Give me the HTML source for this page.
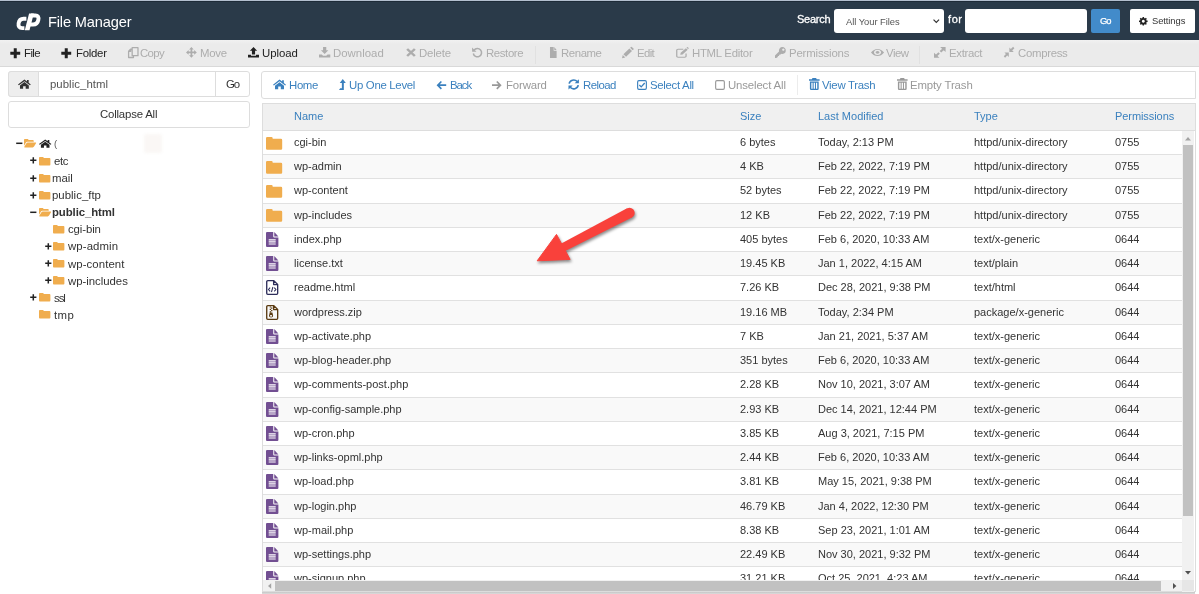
<!DOCTYPE html>
<html><head><meta charset="utf-8"><title>File Manager</title>
<style>
html,body{margin:0;padding:0;}
body{width:1199px;height:594px;overflow:hidden;background:#fff;position:relative;font-family:"Liberation Sans",sans-serif;}
.t{position:absolute;white-space:nowrap;line-height:1;font-family:"Liberation Sans",sans-serif;will-change:transform;}
#w{position:absolute;left:0;top:0;width:1199px;height:594px;transform:translateZ(0);}
.ic{position:absolute;display:block;overflow:visible;}
.b{position:absolute;box-sizing:border-box;}
</style></head><body><div id="w">

<div class="b" style="left:0;top:0;width:1199px;height:40px;background:#2a3a49;border-top:1px solid #b3bfcf;"></div><div class="b" style="left:0;top:1px;width:1199px;height:1px;background:#1e2b38;"></div>
<svg class="ic" style="left:15.500px;top:13px;width:25px;height:17.500px" viewBox="0 0 25 17.500"><path d="M10.400 5.700H7.600Q3.300 5.700 2.600 10.300T6.200 15.100H8.400" stroke="#fff" stroke-width="3.900" fill="none"/><path d="M8.800 17.300H13.500L17.800.4H13.100z" fill="#fff"/><path d="M15 2.550H19.400Q23.200 2.550 22.300 7T17 11.500H13.600" stroke="#fff" stroke-width="3.900" fill="none"/></svg>
<span class="t" style="left:48px;top:15px;font-size:14.6px;color:#fff;letter-spacing:-0.15px;">File Manager</span>
<span class="t" style="left:797.2px;top:14px;font-size:11px;color:#fff;letter-spacing:-0.25px;-webkit-text-stroke:.3px #fff;">Search</span>
<div class="b" style="left:834px;top:9px;width:110px;height:24px;background:#fff;border-radius:3px;"></div>
<span class="t" style="left:846.2px;top:17px;font-size:9.4px;color:#555;letter-spacing:-0.04px;">All Your Files</span>
<svg class="ic" style="left:933.200px;top:19.400px;width:6.600px;height:4.600px" viewBox="0 0 7 5"><path d="M.5.700L3.500 3.800 6.500.7" fill="none" stroke="#333" stroke-width="1.300"/></svg>
<span class="t" style="left:947.6px;top:14px;font-size:11px;color:#fff;letter-spacing:0.59px;-webkit-text-stroke:.3px #fff;">for</span>
<div class="b" style="left:965px;top:9px;width:122px;height:24px;background:#fff;border-radius:3px;"></div>
<div class="b" style="left:1090.500px;top:9px;width:29.500px;height:24px;background:#428bca;border-radius:2px;"></div>
<span class="t" style="left:1099.8px;top:16px;font-size:9.4px;color:#fff;letter-spacing:-1.05px;-webkit-text-stroke:.25px #fff;">Go</span>
<div class="b" style="left:1130px;top:9px;width:65px;height:24px;background:#fff;border-radius:2px;"></div>
<svg class="ic" style="left:1139.4px;top:16.9px;width:8.6px;height:8.6px;color:#222" viewBox="0 0 14 14" fill="currentColor" preserveAspectRatio="none"><path fill-rule="evenodd" d="M5.900 0h2.200l.35 1.750 1.250.52L11.200 1.280l1.520 1.520-.990 1.500.520 1.250L14 5.900v2.200l-1.750.350-.520 1.250.990 1.500-1.520 1.520-1.500-.990-1.250.520L8.100 14H5.900l-.350-1.750-1.250-.520-1.500.990-1.520-1.520.990-1.500-.520-1.250L0 8.100V5.900l1.750-.350.520-1.250-.990-1.500L2.800 1.280l1.500.990 1.250-.520zM7 4.600a2.400 2.400 0 1 0 .01 0z"/></svg>
<span class="t" style="left:1152px;top:16px;font-size:9.4px;color:#333;letter-spacing:-0.08px;">Settings</span>
<div class="b" style="left:0;top:40px;width:1199px;height:27px;background:linear-gradient(#f1f1f1 0,#ebebeb 4px);border-bottom:1px solid #d9d9d9;"></div>
<svg class="ic" style="left:10px;top:47.5px;width:10.5px;height:10.5px;color:#222" viewBox="0 0 14 14" fill="currentColor" preserveAspectRatio="none"><path d="M5 .4h4V5h4.600v4H9v4.600H5V9H.4V5H5z"/></svg>
<span class="t" style="left:24.4px;top:48px;font-size:11.4px;color:#222;letter-spacing:-0.58px;">File</span>
<svg class="ic" style="left:61.2px;top:47.5px;width:10.5px;height:10.5px;color:#222" viewBox="0 0 14 14" fill="currentColor" preserveAspectRatio="none"><path d="M5 .4h4V5h4.600v4H9v4.600H5V9H.4V5H5z"/></svg>
<span class="t" style="left:76px;top:48px;font-size:11.4px;color:#222;letter-spacing:-0.26px;">Folder</span>
<svg class="ic" style="left:127.6px;top:47px;width:10.6px;height:11.2px;color:#adadad" viewBox="0 0 14 14" fill="currentColor" preserveAspectRatio="none"><path fill="none" stroke="currentColor" stroke-width="1.700" stroke-linejoin="round" d="M5.500.8h7.700v10h-7.700zM5.500 2.800H3.300L.8 5.300v7.900h6.400v-2.400M1 5.300h2.500V3"/></svg>
<span class="t" style="left:140.4px;top:48px;font-size:11.4px;color:#adadad;letter-spacing:-0.61px;">Copy</span>
<svg class="ic" style="left:186.2px;top:47.2px;width:10.8px;height:10.8px;color:#adadad" viewBox="0 0 14 14" fill="currentColor" preserveAspectRatio="none"><path d="M7 0l3 3.400H8.100v2.500H10.600V4L14 7l-3.400 3V8.100H8.100v2.500H10L7 14 4 10.600h1.900V8.100H3.400V10L0 7l3.400-3v1.900h2.500V3.400H4z"/></svg>
<span class="t" style="left:200.2px;top:48px;font-size:11.4px;color:#adadad;letter-spacing:-0.29px;">Move</span>
<svg class="ic" style="left:247.7px;top:47px;width:11px;height:10.6px;color:#222" viewBox="0 0 14 14" fill="currentColor" preserveAspectRatio="none"><path d="M7 0l4.600 5H9v4.800H5V5H2.400zM0 10.200h3.800v1.300h6.400v-1.300H14V14H0z"/></svg>
<span class="t" style="left:262.2px;top:48px;font-size:11.4px;color:#222;letter-spacing:-0.07px;">Upload</span>
<svg class="ic" style="left:318.7px;top:47.2px;width:11.3px;height:10.6px;color:#adadad" viewBox="0 0 14 14" fill="currentColor" preserveAspectRatio="none"><path d="M5 0h4v4.4h2.6L7 9.4 2.4 4.4H5zM0 9.8h3.4L5 11.4h4l1.6-1.6H14V14H0z"/></svg>
<span class="t" style="left:333.2px;top:48px;font-size:11.4px;color:#adadad;letter-spacing:0.02px;">Download</span>
<svg class="ic" style="left:405.5px;top:48.3px;width:10px;height:9px;color:#adadad" viewBox="0 0 14 14" fill="currentColor" preserveAspectRatio="none"><path fill="none" stroke="currentColor" stroke-width="3.600" d="M1.600 1.600l10.800 10.800M12.400 1.600L1.600 12.400"/></svg>
<span class="t" style="left:419px;top:48px;font-size:11.4px;color:#adadad;letter-spacing:-0.19px;">Delete</span>
<svg class="ic" style="left:471.7px;top:47.2px;width:10.8px;height:10.8px;color:#adadad" viewBox="0 0 14 14" fill="currentColor" preserveAspectRatio="none"><path fill="none" stroke="currentColor" stroke-width="2" d="M2.6 4.2A5.4 5.4 0 1 1 1.7 8.4"/><path d="M0 .6l.2 5.6 5.6-.2z"/></svg>
<span class="t" style="left:486.2px;top:48px;font-size:11.4px;color:#adadad;letter-spacing:-0.38px;">Restore</span>
<svg class="ic" style="left:549.2px;top:47px;width:8.6px;height:11px;color:#adadad" viewBox="0 0 14 14" fill="currentColor" preserveAspectRatio="none"><path d="M1.6 0h6v4.8h4.8V14H1.6zM8.6 0l3.8 3.8H8.6z"/></svg>
<span class="t" style="left:561px;top:48px;font-size:11.4px;color:#adadad;letter-spacing:-0.42px;">Rename</span>
<svg class="ic" style="left:622.2px;top:46.8px;width:11.6px;height:11.2px;color:#adadad" viewBox="0 0 14 14" fill="currentColor" preserveAspectRatio="none"><path d="M0 14l.9-4 3.1 3.1zM1.7 9.1l7.2-7.2 3.2 3.2-7.2 7.2zM9.8 1L10.9 0q.7-.4 1.3.2l1.7 1.7q.5.6 0 1.2L12.9 4.1z"/></svg>
<span class="t" style="left:637.2px;top:48px;font-size:11.4px;color:#adadad;letter-spacing:-0.62px;">Edit</span>
<svg class="ic" style="left:676px;top:47px;width:12.8px;height:11px;color:#adadad" viewBox="0 0 14 14" fill="currentColor" preserveAspectRatio="none"><path fill="none" stroke="currentColor" stroke-width="1.4" stroke-linejoin="round" d="M11 8.4v3.2a1.4 1.4 0 0 1-1.4 1.4H2.2A1.4 1.4 0 0 1 .8 11.600V4.2A1.400 1.400 0 0 1 2.200 2.800H8"/><path d="M5 10.600l.5-2.700L11.600 1.700l2.200 2.200L7.700 10.100zM12.300 1l.7-.7q.5-.4 1 0l.9.900q.4.500 0 1L14.200 2.900z" transform="scale(.93)"/></svg>
<span class="t" style="left:692.2px;top:48px;font-size:11.4px;color:#adadad;letter-spacing:-0.28px;">HTML Editor</span>
<svg class="ic" style="left:774.6px;top:47px;width:10.8px;height:11px;color:#adadad" viewBox="0 0 14 14" fill="currentColor" preserveAspectRatio="none"><path fill-rule="evenodd" d="M9.500 0a4.500 4.500 0 1 1-1.600 8.700L6.900 9.800H5.300V11.400H3.700V13H2.300V14H0V10.800L5.200 5.600A4.500 4.500 0 0 1 9.500 0zM10.800 1.900a1.500 1.500 0 1 0 .01 0z"/></svg>
<span class="t" style="left:789px;top:48px;font-size:11.4px;color:#adadad;letter-spacing:-0.16px;">Permissions</span>
<svg class="ic" style="left:870.5px;top:48.2px;width:12.2px;height:8.8px;color:#adadad" viewBox="0 0 14 14" fill="currentColor" preserveAspectRatio="none"><path fill-rule="evenodd" d="M0 7Q3.200 1.400 7.500 1.400T15 7Q11.800 12.600 7.500 12.600T0 7zM7.500 2.900A4.100 4.100 0 1 0 7.510 2.900zM7.500 4.800a2.200 2.200 0 1 1-.01 0z"/></svg>
<span class="t" style="left:886.2px;top:48px;font-size:11.4px;color:#adadad;letter-spacing:-0.5px;">View</span>
<svg class="ic" style="left:933.6px;top:47.2px;width:11.6px;height:10.8px;color:#adadad" viewBox="0 0 14 14" fill="currentColor" preserveAspectRatio="none"><path d="M7.400 0H14V6.600zM0 7.400V14H6.600z"/><path fill="none" stroke="currentColor" stroke-width="2.600" d="M11.500 2.500L7.800 6.200M2.500 11.500L6.200 7.800"/></svg>
<span class="t" style="left:949px;top:48px;font-size:11.4px;color:#adadad;letter-spacing:-0.33px;">Extract</span>
<svg class="ic" style="left:1003.7px;top:47.2px;width:10.2px;height:10.4px;color:#adadad" viewBox="0 0 14 14" fill="currentColor" preserveAspectRatio="none"><path d="M7.400 6.600V.6L13.400 6.600zM6.600 7.400V13.400L.6 7.400z"/><path fill="none" stroke="currentColor" stroke-width="2.600" d="M10 4L13.400.6M4 10L.6 13.400"/></svg>
<span class="t" style="left:1017.7px;top:48px;font-size:11.4px;color:#adadad;letter-spacing:-0.3px;">Compress</span>
<div class="b" style="left:534.500px;top:46px;width:1px;height:18px;background:#e1e1e1;"></div>
<div class="b" style="left:919px;top:46px;width:1px;height:18px;background:#e1e1e1;"></div>
<div class="b" style="left:8px;top:71px;width:241.500px;height:26px;border:1px solid #ddd;border-radius:3px;background:#fff;"></div>
<div class="b" style="left:8px;top:71px;width:31px;height:26px;border:1px solid #ddd;border-radius:3px 0 0 3px;background:#eee;"></div>
<div class="b" style="left:214.500px;top:72px;width:1px;height:24px;background:#ddd;"></div>
<svg class="ic" style="left:18px;top:78.6px;width:12.8px;height:10.4px;color:#333" viewBox="0 0 15 14" fill="currentColor" preserveAspectRatio="none"><path d="M7.500.8L0 7.400l1 1.100L7.500 2.900 14 8.500l1-1.100-2.500-2.200V1.500h-2v1.900zM2.300 8.600L7.500 4.100l5.200 4.500V13.200H9V9.600H6v3.600H2.300z"/></svg>
<span class="t" style="left:50.4px;top:79px;font-size:11.4px;color:#555;letter-spacing:0.04px;">public_html</span>
<span class="t" style="left:225.6px;top:79px;font-size:11.4px;color:#333;letter-spacing:-1.22px;">Go</span>
<div class="b" style="left:8px;top:101px;width:241.500px;height:26.500px;border:1px solid #ddd;border-radius:3px;background:#fff;"></div>
<span class="t" style="left:100px;top:109px;font-size:11.4px;color:#333;letter-spacing:-0.19px;">Collapse All</span>
<svg class="ic" style="left:15.6px;top:140.3px;width:6.6px;height:6.6px;color:#222" viewBox="0 0 14 14" fill="currentColor" preserveAspectRatio="none"><path d="M.4 5.400h13.200v3.200H.4z"/></svg>
<svg class="ic" style="left:24.2px;top:139.4px;width:12.2px;height:8.4px;color:#f0ad4e" viewBox="0 1 17 12" fill="currentColor" preserveAspectRatio="none"><path d="M0 2.200A1.200 1.200 0 0 1 1.200 1H5A1.200 1.200 0 0 1 6.200 2.200v.4H12.400A1.200 1.200 0 0 1 13.600 3.800V5H4.600Q3.400 5 2.800 6L0 10.600zM.4 12.200L3.400 7q.6-1 1.800-1H16.400q.9 0 .4.900L14 11.900q-.6 1.100-1.800 1.100H1q-1 0-.6-.8z"/></svg>
<svg class="ic" style="left:39px;top:139.2px;width:12.4px;height:9.4px;color:#222" viewBox="0 0 15 14" fill="currentColor" preserveAspectRatio="none"><path d="M7.500.8L0 7.400l1 1.100L7.500 2.900 14 8.500l1-1.100-2.500-2.200V1.500h-2v1.900zM2.300 8.600L7.500 4.100l5.200 4.500V13.200H9V9.600H6v3.600H2.300z"/></svg>
<span class="t" style="left:54.4px;top:139px;font-size:9.5px;color:#555;">(</span>
<svg class="ic" style="left:30px;top:157.4px;width:6.6px;height:6.6px;color:#222" viewBox="0 0 14 14" fill="currentColor" preserveAspectRatio="none"><path d="M5.400 .4h3.200V5.400h5v3.200h-5v5H5.400v-5H.4V5.400h5z"/></svg>
<svg class="ic" style="left:38.6px;top:156.5px;width:11.4px;height:8.4px;color:#f0ad4e" viewBox="0 1 16 12" fill="currentColor" preserveAspectRatio="none"><path d="M0 2.200A1.200 1.200 0 0 1 1.200 1H5.400A1.200 1.200 0 0 1 6.600 2.200v.4H14.800A1.200 1.200 0 0 1 16 3.800V11.800A1.200 1.200 0 0 1 14.800 13H1.200A1.200 1.200 0 0 1 0 11.800z"/></svg>
<span class="t" style="left:53.6px;top:156px;font-size:11.4px;color:#333;letter-spacing:-0.41px;">etc</span>
<svg class="ic" style="left:30px;top:174.5px;width:6.6px;height:6.6px;color:#222" viewBox="0 0 14 14" fill="currentColor" preserveAspectRatio="none"><path d="M5.400 .4h3.200V5.400h5v3.200h-5v5H5.400v-5H.4V5.400h5z"/></svg>
<svg class="ic" style="left:38.6px;top:173.6px;width:11.4px;height:8.4px;color:#f0ad4e" viewBox="0 1 16 12" fill="currentColor" preserveAspectRatio="none"><path d="M0 2.200A1.200 1.200 0 0 1 1.200 1H5.400A1.200 1.200 0 0 1 6.600 2.200v.4H14.800A1.200 1.200 0 0 1 16 3.800V11.800A1.200 1.200 0 0 1 14.800 13H1.200A1.200 1.200 0 0 1 0 11.800z"/></svg>
<span class="t" style="left:52.2px;top:173px;font-size:11.4px;color:#333;letter-spacing:-0.04px;">mail</span>
<svg class="ic" style="left:30px;top:191.6px;width:6.6px;height:6.6px;color:#222" viewBox="0 0 14 14" fill="currentColor" preserveAspectRatio="none"><path d="M5.400 .4h3.200V5.400h5v3.200h-5v5H5.400v-5H.4V5.400h5z"/></svg>
<svg class="ic" style="left:38.6px;top:190.7px;width:11.4px;height:8.4px;color:#f0ad4e" viewBox="0 1 16 12" fill="currentColor" preserveAspectRatio="none"><path d="M0 2.200A1.200 1.200 0 0 1 1.200 1H5.400A1.200 1.200 0 0 1 6.600 2.200v.4H14.800A1.200 1.200 0 0 1 16 3.800V11.800A1.200 1.200 0 0 1 14.800 13H1.200A1.200 1.200 0 0 1 0 11.800z"/></svg>
<span class="t" style="left:52.2px;top:190px;font-size:11.4px;color:#333;letter-spacing:0.02px;">public_ftp</span>
<svg class="ic" style="left:30px;top:208.7px;width:6.6px;height:6.6px;color:#222" viewBox="0 0 14 14" fill="currentColor" preserveAspectRatio="none"><path d="M.4 5.400h13.200v3.200H.4z"/></svg>
<svg class="ic" style="left:38.6px;top:207.8px;width:12.2px;height:8.4px;color:#f0ad4e" viewBox="0 1 17 12" fill="currentColor" preserveAspectRatio="none"><path d="M0 2.200A1.200 1.200 0 0 1 1.200 1H5A1.200 1.200 0 0 1 6.200 2.200v.4H12.400A1.200 1.200 0 0 1 13.600 3.800V5H4.600Q3.400 5 2.800 6L0 10.600zM.4 12.200L3.400 7q.6-1 1.800-1H16.400q.9 0 .4.900L14 11.900q-.6 1.100-1.800 1.100H1q-1 0-.6-.8z"/></svg>
<span class="t" style="left:52.2px;top:207px;font-size:11.4px;color:#333;letter-spacing:-0.1px;font-weight:bold;">public_html</span>
<svg class="ic" style="left:53.2px;top:224.9px;width:11.4px;height:8.4px;color:#f0ad4e" viewBox="0 1 16 12" fill="currentColor" preserveAspectRatio="none"><path d="M0 2.200A1.200 1.200 0 0 1 1.200 1H5.400A1.200 1.200 0 0 1 6.600 2.200v.4H14.800A1.200 1.200 0 0 1 16 3.800V11.800A1.200 1.200 0 0 1 14.800 13H1.200A1.200 1.200 0 0 1 0 11.800z"/></svg>
<span class="t" style="left:67.8px;top:224px;font-size:11.4px;color:#333;letter-spacing:-0.1px;">cgi-bin</span>
<svg class="ic" style="left:44.6px;top:242.9px;width:6.6px;height:6.6px;color:#222" viewBox="0 0 14 14" fill="currentColor" preserveAspectRatio="none"><path d="M5.400 .4h3.200V5.400h5v3.200h-5v5H5.400v-5H.4V5.400h5z"/></svg>
<svg class="ic" style="left:53.2px;top:242px;width:11.4px;height:8.4px;color:#f0ad4e" viewBox="0 1 16 12" fill="currentColor" preserveAspectRatio="none"><path d="M0 2.200A1.200 1.200 0 0 1 1.200 1H5.400A1.200 1.200 0 0 1 6.600 2.200v.4H14.800A1.200 1.200 0 0 1 16 3.800V11.800A1.200 1.200 0 0 1 14.800 13H1.200A1.200 1.200 0 0 1 0 11.800z"/></svg>
<span class="t" style="left:67.86px;top:241px;font-size:11.4px;color:#333;letter-spacing:0.1px;">wp-admin</span>
<svg class="ic" style="left:44.6px;top:260px;width:6.6px;height:6.6px;color:#222" viewBox="0 0 14 14" fill="currentColor" preserveAspectRatio="none"><path d="M5.400 .4h3.200V5.400h5v3.200h-5v5H5.400v-5H.4V5.400h5z"/></svg>
<svg class="ic" style="left:53.2px;top:259.1px;width:11.4px;height:8.4px;color:#f0ad4e" viewBox="0 1 16 12" fill="currentColor" preserveAspectRatio="none"><path d="M0 2.200A1.200 1.200 0 0 1 1.200 1H5.400A1.200 1.200 0 0 1 6.600 2.200v.4H14.800A1.200 1.200 0 0 1 16 3.800V11.800A1.200 1.200 0 0 1 14.800 13H1.200A1.200 1.200 0 0 1 0 11.800z"/></svg>
<span class="t" style="left:67.86px;top:259px;font-size:11.4px;color:#333;letter-spacing:0.08px;">wp-content</span>
<svg class="ic" style="left:44.6px;top:277.1px;width:6.6px;height:6.6px;color:#222" viewBox="0 0 14 14" fill="currentColor" preserveAspectRatio="none"><path d="M5.400 .4h3.200V5.400h5v3.200h-5v5H5.400v-5H.4V5.400h5z"/></svg>
<svg class="ic" style="left:53.2px;top:276.2px;width:11.4px;height:8.4px;color:#f0ad4e" viewBox="0 1 16 12" fill="currentColor" preserveAspectRatio="none"><path d="M0 2.200A1.200 1.200 0 0 1 1.200 1H5.400A1.200 1.200 0 0 1 6.600 2.200v.4H14.800A1.200 1.200 0 0 1 16 3.800V11.800A1.200 1.200 0 0 1 14.800 13H1.200A1.200 1.200 0 0 1 0 11.800z"/></svg>
<span class="t" style="left:67.86px;top:276px;font-size:11.4px;color:#333;letter-spacing:-0.03px;">wp-includes</span>
<svg class="ic" style="left:30px;top:294.2px;width:6.6px;height:6.6px;color:#222" viewBox="0 0 14 14" fill="currentColor" preserveAspectRatio="none"><path d="M5.400 .4h3.200V5.400h5v3.200h-5v5H5.400v-5H.4V5.400h5z"/></svg>
<svg class="ic" style="left:38.6px;top:293.3px;width:11.4px;height:8.4px;color:#f0ad4e" viewBox="0 1 16 12" fill="currentColor" preserveAspectRatio="none"><path d="M0 2.200A1.200 1.200 0 0 1 1.200 1H5.400A1.200 1.200 0 0 1 6.600 2.200v.4H14.800A1.200 1.200 0 0 1 16 3.800V11.800A1.200 1.200 0 0 1 14.800 13H1.200A1.200 1.200 0 0 1 0 11.800z"/></svg>
<span class="t" style="left:53.8px;top:293px;font-size:11.4px;color:#333;letter-spacing:-1.05px;">ssl</span>
<svg class="ic" style="left:38.6px;top:310.4px;width:11.4px;height:8.4px;color:#f0ad4e" viewBox="0 1 16 12" fill="currentColor" preserveAspectRatio="none"><path d="M0 2.200A1.200 1.200 0 0 1 1.200 1H5.400A1.200 1.200 0 0 1 6.600 2.200v.4H14.800A1.200 1.200 0 0 1 16 3.800V11.800A1.200 1.200 0 0 1 14.800 13H1.200A1.200 1.200 0 0 1 0 11.800z"/></svg>
<span class="t" style="left:53.8px;top:310px;font-size:11.4px;color:#333;letter-spacing:0.41px;">tmp</span>
<div class="b" style="left:144px;top:134px;width:17.500px;height:19px;background:#faf7f5;border-radius:2px;filter:blur(1.500px)"></div>
<div class="b" style="left:261px;top:71px;width:935px;height:28px;border:1px solid #ddd;border-radius:3px 0 0 3px;background:#fff;"></div>
<svg class="ic" style="left:272.5px;top:79.4px;width:13px;height:10.8px;color:#3a80be" viewBox="0 0 15 14" fill="currentColor" preserveAspectRatio="none"><path d="M7.500.8L0 7.400l1 1.100L7.500 2.900 14 8.500l1-1.100-2.500-2.200V1.500h-2v1.900zM2.300 8.600L7.500 4.100l5.200 4.500V13.200H9V9.600H6v3.600H2.300z"/></svg>
<span class="t" style="left:288.6px;top:80px;font-size:11.4px;color:#3a80be;letter-spacing:-0.35px;">Home</span>
<svg class="ic" style="left:338.8px;top:79.4px;width:6.8px;height:11px;color:#3a80be" viewBox="0 0 9 13" fill="currentColor" preserveAspectRatio="none"><path d="M5 0l4 4.600H6.400V13H0l1.600-2.200h2.200V4.600H1z"/></svg>
<span class="t" style="left:349px;top:80px;font-size:11.4px;color:#3a80be;letter-spacing:-0.3px;">Up One Level</span>
<svg class="ic" style="left:436.2px;top:79.6px;width:10.2px;height:10.4px;color:#3a80be" viewBox="0 0 14 14" fill="currentColor" preserveAspectRatio="none"><path d="M6.600 1.200l1.600 1.600-3 3H14v2.400H5.200l3 3-1.600 1.600L.8 7z"/></svg>
<span class="t" style="left:449.8px;top:80px;font-size:11.4px;color:#3a80be;letter-spacing:-1.07px;">Back</span>
<svg class="ic" style="left:492.4px;top:79.6px;width:10.2px;height:10.4px;color:#999" viewBox="0 0 14 14" fill="currentColor" preserveAspectRatio="none"><path d="M7.400 1.200L5.800 2.800l3 3H0v2.400h8.800l-3 3 1.600 1.600L13.200 7z"/></svg>
<span class="t" style="left:506px;top:80px;font-size:11.4px;color:#999;letter-spacing:-0.14px;">Forward</span>
<svg class="ic" style="left:568px;top:79.4px;width:11.4px;height:10.8px;color:#3a80be" viewBox="0 0 14 14" fill="currentColor" preserveAspectRatio="none"><path fill="none" stroke="currentColor" stroke-width="2" d="M1.400 6A5.700 5.700 0 0 1 11.300 3.200M12.600 8A5.700 5.700 0 0 1 2.700 10.800"/><path d="M13.400.4v5.200H8.200zM.6 13.600V8.400h5.200z"/></svg>
<span class="t" style="left:582.8px;top:80px;font-size:11.4px;color:#3a80be;letter-spacing:-0.55px;">Reload</span>
<svg class="ic" style="left:637.1px;top:79.8px;width:10px;height:10px;color:#3a80be" viewBox="0 0 14 14" fill="currentColor" preserveAspectRatio="none"><rect x=".9" y=".9" width="12.200" height="12.200" rx="1.800" fill="none" stroke="currentColor" stroke-width="1.600"/><path fill="none" stroke="currentColor" stroke-width="1.900" d="M3.300 6.900l2.600 2.700 4.900-5.400"/></svg>
<span class="t" style="left:650.2px;top:80px;font-size:11.4px;color:#3a80be;letter-spacing:-0.3px;">Select All</span>
<svg class="ic" style="left:715.1px;top:79.8px;width:10px;height:10px;color:#999" viewBox="0 0 14 14" fill="currentColor" preserveAspectRatio="none"><rect x=".9" y=".9" width="12.200" height="12.200" rx="1.800" fill="none" stroke="currentColor" stroke-width="1.600"/></svg>
<span class="t" style="left:728.2px;top:80px;font-size:11.4px;color:#999;letter-spacing:-0.14px;">Unselect All</span>
<svg class="ic" style="left:808.8px;top:78px;width:10.6px;height:12px;color:#3a80be" viewBox="0 0 14 14" fill="currentColor" preserveAspectRatio="none"><path fill-rule="evenodd" d="M4.600 0h4.800l.8 1.600H14v1.600H0V1.600h3.800zM1.200 4.200h11.600V12.400A1.600 1.600 0 0 1 11.200 14H2.800A1.600 1.600 0 0 1 1.200 12.400zM3.100 5.600v6.800h1.700V5.600zM6.150 5.600v6.800h1.700V5.600zM9.200 5.600v6.800h1.700V5.600z"/></svg>
<span class="t" style="left:822.4px;top:80px;font-size:11.4px;color:#3a80be;letter-spacing:-0.29px;">View Trash</span>
<svg class="ic" style="left:897.4px;top:78px;width:10.6px;height:12px;color:#999" viewBox="0 0 14 14" fill="currentColor" preserveAspectRatio="none"><path fill-rule="evenodd" d="M4.600 0h4.800l.8 1.600H14v1.600H0V1.600h3.800zM1.200 4.200h11.600V12.400A1.600 1.600 0 0 1 11.200 14H2.800A1.600 1.600 0 0 1 1.200 12.400zM3.100 5.600v6.800h1.700V5.600zM6.150 5.600v6.800h1.700V5.600zM9.200 5.600v6.800h1.700V5.600z"/></svg>
<span class="t" style="left:910.2px;top:80px;font-size:11.4px;color:#999;letter-spacing:-0.12px;">Empty Trash</span>
<div class="b" style="left:797px;top:75px;width:1px;height:20px;background:#ececec;"></div>
<div class="b" style="left:261.5px;top:103px;width:934.5px;height:489px;border:1px solid #ddd;background:#fff;"></div>
<div class="b" style="left:262.5px;top:104px;width:932.5px;height:27px;background:#f0f0f0;border-bottom:1px solid #ddd;"></div>
<span class="t" style="left:293.6px;top:111px;font-size:11px;color:#3a80be;">Name</span>
<span class="t" style="left:740.4px;top:111px;font-size:11px;color:#3a80be;">Size</span>
<span class="t" style="left:818.2px;top:111px;font-size:11px;color:#3a80be;">Last Modified</span>
<span class="t" style="left:974.2px;top:111px;font-size:11px;color:#3a80be;">Type</span>
<span class="t" style="left:1115px;top:111px;font-size:11px;color:#3a80be;letter-spacing:-0.07px;">Permissions</span>
<div class="b" style="left:262.5px;top:131px;width:919.9px;height:449.4px;overflow:hidden;">
<div class="b" style="left:0;top:0px;width:940px;height:24px;background:#fff;border-bottom:1px solid #e1e1e1;"></div>
<svg class="ic" style="left:3.3px;top:5.5px;width:16.2px;height:12.7px;color:#f0ad4e" viewBox="0 1 16 12" fill="currentColor" preserveAspectRatio="none"><path d="M0 2.200A1.200 1.200 0 0 1 1.200 1H5.400A1.200 1.200 0 0 1 6.600 2.200v.4H14.800A1.200 1.200 0 0 1 16 3.800V11.800A1.200 1.200 0 0 1 14.800 13H1.200A1.200 1.200 0 0 1 0 11.800z"/></svg>
<span class="t" style="left:31.1px;top:6px;font-size:11px;color:#333;">cgi-bin</span>
<span class="t" style="left:477.9px;top:6px;font-size:11px;color:#333;">6 bytes</span>
<span class="t" style="left:555.7px;top:6px;font-size:11px;color:#333;">Today, 2:13 PM</span>
<span class="t" style="left:711.7px;top:6px;font-size:11px;color:#333;">httpd/unix-directory</span>
<span class="t" style="left:852.5px;top:6px;font-size:11px;color:#333;">0755</span>
<div class="b" style="left:0;top:24px;width:940px;height:24px;background:#f9f9f9;border-bottom:1px solid #e1e1e1;"></div>
<svg class="ic" style="left:3.3px;top:29.75px;width:16.2px;height:12.7px;color:#f0ad4e" viewBox="0 1 16 12" fill="currentColor" preserveAspectRatio="none"><path d="M0 2.200A1.200 1.200 0 0 1 1.200 1H5.400A1.200 1.200 0 0 1 6.600 2.200v.4H14.800A1.200 1.200 0 0 1 16 3.800V11.800A1.200 1.200 0 0 1 14.800 13H1.200A1.200 1.200 0 0 1 0 11.800z"/></svg>
<span class="t" style="left:31.16px;top:30px;font-size:11px;color:#333;">wp-admin</span>
<span class="t" style="left:477.9px;top:30px;font-size:11px;color:#333;">4 KB</span>
<span class="t" style="left:555.7px;top:30px;font-size:11px;color:#333;">Feb 22, 2022, 7:19 PM</span>
<span class="t" style="left:711.7px;top:30px;font-size:11px;color:#333;">httpd/unix-directory</span>
<span class="t" style="left:852.5px;top:30px;font-size:11px;color:#333;">0755</span>
<div class="b" style="left:0;top:48px;width:940px;height:25px;background:#fff;border-bottom:1px solid #e1e1e1;"></div>
<svg class="ic" style="left:3.3px;top:54px;width:16.2px;height:12.7px;color:#f0ad4e" viewBox="0 1 16 12" fill="currentColor" preserveAspectRatio="none"><path d="M0 2.200A1.200 1.200 0 0 1 1.200 1H5.400A1.200 1.200 0 0 1 6.600 2.200v.4H14.800A1.200 1.200 0 0 1 16 3.800V11.800A1.200 1.200 0 0 1 14.800 13H1.200A1.200 1.200 0 0 1 0 11.800z"/></svg>
<span class="t" style="left:31.16px;top:54px;font-size:11px;color:#333;">wp-content</span>
<span class="t" style="left:477.9px;top:54px;font-size:11px;color:#333;">52 bytes</span>
<span class="t" style="left:555.7px;top:54px;font-size:11px;color:#333;">Feb 22, 2022, 7:19 PM</span>
<span class="t" style="left:711.7px;top:54px;font-size:11px;color:#333;">httpd/unix-directory</span>
<span class="t" style="left:852.5px;top:54px;font-size:11px;color:#333;">0755</span>
<div class="b" style="left:0;top:73px;width:940px;height:24px;background:#f9f9f9;border-bottom:1px solid #e1e1e1;"></div>
<svg class="ic" style="left:3.3px;top:78.25px;width:16.2px;height:12.7px;color:#f0ad4e" viewBox="0 1 16 12" fill="currentColor" preserveAspectRatio="none"><path d="M0 2.200A1.200 1.200 0 0 1 1.200 1H5.400A1.200 1.200 0 0 1 6.600 2.200v.4H14.800A1.200 1.200 0 0 1 16 3.800V11.800A1.200 1.200 0 0 1 14.800 13H1.200A1.200 1.200 0 0 1 0 11.800z"/></svg>
<span class="t" style="left:31.16px;top:79px;font-size:11px;color:#333;">wp-includes</span>
<span class="t" style="left:477.9px;top:79px;font-size:11px;color:#333;">12 KB</span>
<span class="t" style="left:555.7px;top:79px;font-size:11px;color:#333;">Feb 22, 2022, 7:19 PM</span>
<span class="t" style="left:711.7px;top:79px;font-size:11px;color:#333;">httpd/unix-directory</span>
<span class="t" style="left:852.5px;top:79px;font-size:11px;color:#333;">0755</span>
<div class="b" style="left:0;top:97px;width:940px;height:24px;background:#fff;border-bottom:1px solid #e1e1e1;"></div>
<svg class="ic" style="left:3.7px;top:100.9px;width:12.4px;height:15px;color:#724f92" viewBox="0 0 12 15" fill="currentColor" preserveAspectRatio="none"><path d="M0 1A1 1 0 0 1 1 0H7V4.600A.9.900 0 0 0 7.900 5.500H12V14A1 1 0 0 1 11 15H1A1 1 0 0 1 0 14zM8 0L12 4.400V4.600H8z"/><path fill="#fff" d="M2.600 7.200h6.800v1.200H2.600zM2.600 9.300h6.800v1.200H2.600zM2.600 11.400h6.800v1.200H2.600z"/></svg>
<span class="t" style="left:31.1px;top:103px;font-size:11px;color:#333;">index.php</span>
<span class="t" style="left:477.9px;top:103px;font-size:11px;color:#333;">405 bytes</span>
<span class="t" style="left:555.7px;top:103px;font-size:11px;color:#333;">Feb 6, 2020, 10:33 AM</span>
<span class="t" style="left:711.7px;top:103px;font-size:11px;color:#333;">text/x-generic</span>
<span class="t" style="left:852.5px;top:103px;font-size:11px;color:#333;">0644</span>
<div class="b" style="left:0;top:121px;width:940px;height:24px;background:#f9f9f9;border-bottom:1px solid #e1e1e1;"></div>
<svg class="ic" style="left:3.7px;top:125.15px;width:12.4px;height:15px;color:#724f92" viewBox="0 0 12 15" fill="currentColor" preserveAspectRatio="none"><path d="M0 1A1 1 0 0 1 1 0H7V4.600A.9.900 0 0 0 7.900 5.500H12V14A1 1 0 0 1 11 15H1A1 1 0 0 1 0 14zM8 0L12 4.400V4.600H8z"/><path fill="#fff" d="M2.600 7.200h6.800v1.200H2.600zM2.600 9.300h6.800v1.200H2.600zM2.600 11.400h6.800v1.200H2.600z"/></svg>
<span class="t" style="left:31.1px;top:127px;font-size:11px;color:#333;">license.txt</span>
<span class="t" style="left:477.9px;top:127px;font-size:11px;color:#333;">19.45 KB</span>
<span class="t" style="left:555.7px;top:127px;font-size:11px;color:#333;">Jan 1, 2022, 4:15 AM</span>
<span class="t" style="left:711.7px;top:127px;font-size:11px;color:#333;">text/plain</span>
<span class="t" style="left:852.5px;top:127px;font-size:11px;color:#333;">0644</span>
<div class="b" style="left:0;top:145px;width:940px;height:25px;background:#fff;border-bottom:1px solid #e1e1e1;"></div>
<svg class="ic" style="left:3.7px;top:149.4px;width:12.4px;height:15px;color:#2d2d5a" viewBox="0 0 12 15" fill="currentColor" preserveAspectRatio="none"><path fill="none" stroke="currentColor" stroke-width="1.300" stroke-linejoin="round" d="M.7 1.700A1 1 0 0 1 1.700.7H7.600L11.300 4.400V13.300A1 1 0 0 1 10.300 14.300H1.700A1 1 0 0 1 .7 13.300zM7.400.9V4.600H11.100"/><path fill="none" stroke="currentColor" stroke-width="1" d="M4 7.600L2.400 9.500 4 11.400M8 7.600L9.600 9.500 8 11.400M6.700 7L5.300 12"/></svg>
<span class="t" style="left:31.1px;top:151px;font-size:11px;color:#333;">readme.html</span>
<span class="t" style="left:477.9px;top:151px;font-size:11px;color:#333;">7.26 KB</span>
<span class="t" style="left:555.7px;top:151px;font-size:11px;color:#333;">Dec 28, 2021, 9:38 PM</span>
<span class="t" style="left:711.7px;top:151px;font-size:11px;color:#333;">text/html</span>
<span class="t" style="left:852.5px;top:151px;font-size:11px;color:#333;">0644</span>
<div class="b" style="left:0;top:170px;width:940px;height:24px;background:#f9f9f9;border-bottom:1px solid #e1e1e1;"></div>
<svg class="ic" style="left:3.7px;top:173.65px;width:12.4px;height:15px;color:#5a3a10" viewBox="0 0 12 15" fill="currentColor" preserveAspectRatio="none"><path fill="none" stroke="currentColor" stroke-width="1.300" stroke-linejoin="round" d="M.7 1.700A1 1 0 0 1 1.700.7H7.600L11.300 4.400V13.300A1 1 0 0 1 10.300 14.300H1.700A1 1 0 0 1 .7 13.300zM7.400.9V4.600H11.100"/><path d="M3.600 1.400h1.300v1.200H3.600zM4.900 2.600h1.300v1.200H4.900zM3.600 3.800h1.300v1.200H3.600zM4.900 5h1.300v1.200H4.900zM3.600 6.200h1.300v1.200H3.600z"/><path fill-rule="evenodd" d="M3.600 7.600h2.600l.7 3.200a2 1.700 0 1 1-4 0zM4.900 10a1 .8 0 1 0 .01 0z"/></svg>
<span class="t" style="left:31.16px;top:176px;font-size:11px;color:#333;">wordpress.zip</span>
<span class="t" style="left:477.9px;top:176px;font-size:11px;color:#333;">19.16 MB</span>
<span class="t" style="left:555.7px;top:176px;font-size:11px;color:#333;">Today, 2:34 PM</span>
<span class="t" style="left:711.7px;top:176px;font-size:11px;color:#333;">package/x-generic</span>
<span class="t" style="left:852.5px;top:176px;font-size:11px;color:#333;">0644</span>
<div class="b" style="left:0;top:194px;width:940px;height:24px;background:#fff;border-bottom:1px solid #e1e1e1;"></div>
<svg class="ic" style="left:3.7px;top:197.9px;width:12.4px;height:15px;color:#724f92" viewBox="0 0 12 15" fill="currentColor" preserveAspectRatio="none"><path d="M0 1A1 1 0 0 1 1 0H7V4.600A.9.900 0 0 0 7.900 5.500H12V14A1 1 0 0 1 11 15H1A1 1 0 0 1 0 14zM8 0L12 4.400V4.600H8z"/><path fill="#fff" d="M2.600 7.200h6.800v1.200H2.600zM2.600 9.300h6.800v1.200H2.600zM2.600 11.400h6.800v1.200H2.600z"/></svg>
<span class="t" style="left:31.16px;top:200px;font-size:11px;color:#333;">wp-activate.php</span>
<span class="t" style="left:477.9px;top:200px;font-size:11px;color:#333;">7 KB</span>
<span class="t" style="left:555.7px;top:200px;font-size:11px;color:#333;">Jan 21, 2021, 5:37 AM</span>
<span class="t" style="left:711.7px;top:200px;font-size:11px;color:#333;">text/x-generic</span>
<span class="t" style="left:852.5px;top:200px;font-size:11px;color:#333;">0644</span>
<div class="b" style="left:0;top:218px;width:940px;height:24px;background:#f9f9f9;border-bottom:1px solid #e1e1e1;"></div>
<svg class="ic" style="left:3.7px;top:222.15px;width:12.4px;height:15px;color:#724f92" viewBox="0 0 12 15" fill="currentColor" preserveAspectRatio="none"><path d="M0 1A1 1 0 0 1 1 0H7V4.600A.9.900 0 0 0 7.900 5.500H12V14A1 1 0 0 1 11 15H1A1 1 0 0 1 0 14zM8 0L12 4.400V4.600H8z"/><path fill="#fff" d="M2.600 7.200h6.800v1.200H2.600zM2.600 9.300h6.800v1.200H2.600zM2.600 11.400h6.800v1.200H2.600z"/></svg>
<span class="t" style="left:31.16px;top:224px;font-size:11px;color:#333;">wp-blog-header.php</span>
<span class="t" style="left:477.9px;top:224px;font-size:11px;color:#333;">351 bytes</span>
<span class="t" style="left:555.7px;top:224px;font-size:11px;color:#333;">Feb 6, 2020, 10:33 AM</span>
<span class="t" style="left:711.7px;top:224px;font-size:11px;color:#333;">text/x-generic</span>
<span class="t" style="left:852.5px;top:224px;font-size:11px;color:#333;">0644</span>
<div class="b" style="left:0;top:242px;width:940px;height:25px;background:#fff;border-bottom:1px solid #e1e1e1;"></div>
<svg class="ic" style="left:3.7px;top:246.4px;width:12.4px;height:15px;color:#724f92" viewBox="0 0 12 15" fill="currentColor" preserveAspectRatio="none"><path d="M0 1A1 1 0 0 1 1 0H7V4.600A.9.900 0 0 0 7.900 5.500H12V14A1 1 0 0 1 11 15H1A1 1 0 0 1 0 14zM8 0L12 4.400V4.600H8z"/><path fill="#fff" d="M2.600 7.200h6.800v1.200H2.600zM2.600 9.300h6.800v1.200H2.600zM2.600 11.400h6.800v1.200H2.600z"/></svg>
<span class="t" style="left:31.16px;top:248px;font-size:11px;color:#333;">wp-comments-post.php</span>
<span class="t" style="left:477.9px;top:248px;font-size:11px;color:#333;">2.28 KB</span>
<span class="t" style="left:555.7px;top:248px;font-size:11px;color:#333;">Nov 10, 2021, 3:07 AM</span>
<span class="t" style="left:711.7px;top:248px;font-size:11px;color:#333;">text/x-generic</span>
<span class="t" style="left:852.5px;top:248px;font-size:11px;color:#333;">0644</span>
<div class="b" style="left:0;top:267px;width:940px;height:24px;background:#f9f9f9;border-bottom:1px solid #e1e1e1;"></div>
<svg class="ic" style="left:3.7px;top:270.65px;width:12.4px;height:15px;color:#724f92" viewBox="0 0 12 15" fill="currentColor" preserveAspectRatio="none"><path d="M0 1A1 1 0 0 1 1 0H7V4.600A.9.900 0 0 0 7.900 5.500H12V14A1 1 0 0 1 11 15H1A1 1 0 0 1 0 14zM8 0L12 4.400V4.600H8z"/><path fill="#fff" d="M2.600 7.200h6.800v1.200H2.600zM2.600 9.300h6.800v1.200H2.600zM2.600 11.400h6.800v1.200H2.600z"/></svg>
<span class="t" style="left:31.16px;top:273px;font-size:11px;color:#333;">wp-config-sample.php</span>
<span class="t" style="left:477.9px;top:273px;font-size:11px;color:#333;">2.93 KB</span>
<span class="t" style="left:555.7px;top:273px;font-size:11px;color:#333;">Dec 14, 2021, 12:44 PM</span>
<span class="t" style="left:711.7px;top:273px;font-size:11px;color:#333;">text/x-generic</span>
<span class="t" style="left:852.5px;top:273px;font-size:11px;color:#333;">0644</span>
<div class="b" style="left:0;top:291px;width:940px;height:24px;background:#fff;border-bottom:1px solid #e1e1e1;"></div>
<svg class="ic" style="left:3.7px;top:294.9px;width:12.4px;height:15px;color:#724f92" viewBox="0 0 12 15" fill="currentColor" preserveAspectRatio="none"><path d="M0 1A1 1 0 0 1 1 0H7V4.600A.9.900 0 0 0 7.900 5.500H12V14A1 1 0 0 1 11 15H1A1 1 0 0 1 0 14zM8 0L12 4.400V4.600H8z"/><path fill="#fff" d="M2.600 7.200h6.800v1.200H2.600zM2.600 9.300h6.800v1.200H2.600zM2.600 11.400h6.800v1.200H2.600z"/></svg>
<span class="t" style="left:31.16px;top:297px;font-size:11px;color:#333;">wp-cron.php</span>
<span class="t" style="left:477.9px;top:297px;font-size:11px;color:#333;">3.85 KB</span>
<span class="t" style="left:555.7px;top:297px;font-size:11px;color:#333;">Aug 3, 2021, 7:15 PM</span>
<span class="t" style="left:711.7px;top:297px;font-size:11px;color:#333;">text/x-generic</span>
<span class="t" style="left:852.5px;top:297px;font-size:11px;color:#333;">0644</span>
<div class="b" style="left:0;top:315px;width:940px;height:24px;background:#f9f9f9;border-bottom:1px solid #e1e1e1;"></div>
<svg class="ic" style="left:3.7px;top:319.15px;width:12.4px;height:15px;color:#724f92" viewBox="0 0 12 15" fill="currentColor" preserveAspectRatio="none"><path d="M0 1A1 1 0 0 1 1 0H7V4.600A.9.900 0 0 0 7.900 5.500H12V14A1 1 0 0 1 11 15H1A1 1 0 0 1 0 14zM8 0L12 4.400V4.600H8z"/><path fill="#fff" d="M2.600 7.200h6.800v1.200H2.600zM2.600 9.300h6.800v1.200H2.600zM2.600 11.400h6.800v1.200H2.600z"/></svg>
<span class="t" style="left:31.16px;top:321px;font-size:11px;color:#333;">wp-links-opml.php</span>
<span class="t" style="left:477.9px;top:321px;font-size:11px;color:#333;">2.44 KB</span>
<span class="t" style="left:555.7px;top:321px;font-size:11px;color:#333;">Feb 6, 2020, 10:33 AM</span>
<span class="t" style="left:711.7px;top:321px;font-size:11px;color:#333;">text/x-generic</span>
<span class="t" style="left:852.5px;top:321px;font-size:11px;color:#333;">0644</span>
<div class="b" style="left:0;top:339px;width:940px;height:25px;background:#fff;border-bottom:1px solid #e1e1e1;"></div>
<svg class="ic" style="left:3.7px;top:343.4px;width:12.4px;height:15px;color:#724f92" viewBox="0 0 12 15" fill="currentColor" preserveAspectRatio="none"><path d="M0 1A1 1 0 0 1 1 0H7V4.600A.9.900 0 0 0 7.900 5.500H12V14A1 1 0 0 1 11 15H1A1 1 0 0 1 0 14zM8 0L12 4.400V4.600H8z"/><path fill="#fff" d="M2.600 7.200h6.800v1.200H2.600zM2.600 9.300h6.800v1.200H2.600zM2.600 11.400h6.800v1.200H2.600z"/></svg>
<span class="t" style="left:31.16px;top:345px;font-size:11px;color:#333;">wp-load.php</span>
<span class="t" style="left:477.9px;top:345px;font-size:11px;color:#333;">3.81 KB</span>
<span class="t" style="left:555.7px;top:345px;font-size:11px;color:#333;">May 15, 2021, 9:38 PM</span>
<span class="t" style="left:711.7px;top:345px;font-size:11px;color:#333;">text/x-generic</span>
<span class="t" style="left:852.5px;top:345px;font-size:11px;color:#333;">0644</span>
<div class="b" style="left:0;top:364px;width:940px;height:24px;background:#f9f9f9;border-bottom:1px solid #e1e1e1;"></div>
<svg class="ic" style="left:3.7px;top:367.65px;width:12.4px;height:15px;color:#724f92" viewBox="0 0 12 15" fill="currentColor" preserveAspectRatio="none"><path d="M0 1A1 1 0 0 1 1 0H7V4.600A.9.900 0 0 0 7.900 5.500H12V14A1 1 0 0 1 11 15H1A1 1 0 0 1 0 14zM8 0L12 4.400V4.600H8z"/><path fill="#fff" d="M2.600 7.200h6.800v1.200H2.600zM2.600 9.300h6.800v1.200H2.600zM2.600 11.400h6.800v1.200H2.600z"/></svg>
<span class="t" style="left:31.16px;top:370px;font-size:11px;color:#333;">wp-login.php</span>
<span class="t" style="left:477.9px;top:370px;font-size:11px;color:#333;">46.79 KB</span>
<span class="t" style="left:555.7px;top:370px;font-size:11px;color:#333;">Jan 4, 2022, 12:30 PM</span>
<span class="t" style="left:711.7px;top:370px;font-size:11px;color:#333;">text/x-generic</span>
<span class="t" style="left:852.5px;top:370px;font-size:11px;color:#333;">0644</span>
<div class="b" style="left:0;top:388px;width:940px;height:24px;background:#fff;border-bottom:1px solid #e1e1e1;"></div>
<svg class="ic" style="left:3.7px;top:391.9px;width:12.4px;height:15px;color:#724f92" viewBox="0 0 12 15" fill="currentColor" preserveAspectRatio="none"><path d="M0 1A1 1 0 0 1 1 0H7V4.600A.9.900 0 0 0 7.900 5.500H12V14A1 1 0 0 1 11 15H1A1 1 0 0 1 0 14zM8 0L12 4.400V4.600H8z"/><path fill="#fff" d="M2.600 7.200h6.800v1.200H2.600zM2.600 9.300h6.800v1.200H2.600zM2.600 11.400h6.800v1.200H2.600z"/></svg>
<span class="t" style="left:31.16px;top:394px;font-size:11px;color:#333;">wp-mail.php</span>
<span class="t" style="left:477.9px;top:394px;font-size:11px;color:#333;">8.38 KB</span>
<span class="t" style="left:555.7px;top:394px;font-size:11px;color:#333;">Sep 23, 2021, 1:01 AM</span>
<span class="t" style="left:711.7px;top:394px;font-size:11px;color:#333;">text/x-generic</span>
<span class="t" style="left:852.5px;top:394px;font-size:11px;color:#333;">0644</span>
<div class="b" style="left:0;top:412px;width:940px;height:24px;background:#f9f9f9;border-bottom:1px solid #e1e1e1;"></div>
<svg class="ic" style="left:3.7px;top:416.15px;width:12.4px;height:15px;color:#724f92" viewBox="0 0 12 15" fill="currentColor" preserveAspectRatio="none"><path d="M0 1A1 1 0 0 1 1 0H7V4.600A.9.900 0 0 0 7.900 5.500H12V14A1 1 0 0 1 11 15H1A1 1 0 0 1 0 14zM8 0L12 4.400V4.600H8z"/><path fill="#fff" d="M2.600 7.200h6.800v1.200H2.600zM2.600 9.300h6.800v1.200H2.600zM2.600 11.400h6.800v1.200H2.600z"/></svg>
<span class="t" style="left:31.16px;top:418px;font-size:11px;color:#333;">wp-settings.php</span>
<span class="t" style="left:477.9px;top:418px;font-size:11px;color:#333;">22.49 KB</span>
<span class="t" style="left:555.7px;top:418px;font-size:11px;color:#333;">Nov 30, 2021, 9:32 PM</span>
<span class="t" style="left:711.7px;top:418px;font-size:11px;color:#333;">text/x-generic</span>
<span class="t" style="left:852.5px;top:418px;font-size:11px;color:#333;">0644</span>
<div class="b" style="left:0;top:436px;width:940px;height:25px;background:#fff;border-bottom:1px solid #e1e1e1;"></div>
<svg class="ic" style="left:3.7px;top:440.4px;width:12.4px;height:15px;color:#724f92" viewBox="0 0 12 15" fill="currentColor" preserveAspectRatio="none"><path d="M0 1A1 1 0 0 1 1 0H7V4.600A.9.900 0 0 0 7.900 5.500H12V14A1 1 0 0 1 11 15H1A1 1 0 0 1 0 14zM8 0L12 4.400V4.600H8z"/><path fill="#fff" d="M2.600 7.200h6.800v1.200H2.600zM2.600 9.300h6.800v1.200H2.600zM2.600 11.400h6.800v1.200H2.600z"/></svg>
<span class="t" style="left:31.16px;top:442px;font-size:11px;color:#333;">wp-signup.php</span>
<span class="t" style="left:477.9px;top:442px;font-size:11px;color:#333;">31.21 KB</span>
<span class="t" style="left:555.7px;top:442px;font-size:11px;color:#333;">Oct 25, 2021, 4:23 AM</span>
<span class="t" style="left:711.7px;top:442px;font-size:11px;color:#333;">text/x-generic</span>
<span class="t" style="left:852.5px;top:442px;font-size:11px;color:#333;">0644</span>
</div>
<div class="b" style="left:1182.4px;top:131px;width:12.1px;height:460.5px;background:#f1f1f1;"></div>
<div class="b" style="left:1183.2px;top:144.500px;width:10px;height:371.8px;background:#c1c1c1;"></div>
<svg class="ic" style="left:1185.400px;top:136.600px;width:6px;height:3.400px" viewBox="0 0 6 3.400"><path d="M3 0L6 3.400H0z" fill="#a3a3a3"/></svg>
<svg class="ic" style="left:1185.400px;top:571px;width:6px;height:3.400px" viewBox="0 0 6 3.400"><path d="M0 0H6L3 3.400z" fill="#505050"/></svg>
<div class="b" style="left:262.5px;top:580.4px;width:919.9px;height:11.1px;background:#f1f1f1;"></div>
<div class="b" style="left:275px;top:581.2px;width:885.7px;height:9.5px;background:#c1c1c1;"></div>
<svg class="ic" style="left:267.600px;top:583.300px;width:3.200px;height:6px" viewBox="0 0 3.400 6"><path d="M3.400 0V6L0 3z" fill="#a3a3a3"/></svg>
<svg class="ic" style="left:1173.400px;top:583.400px;width:3.400px;height:6px" viewBox="0 0 3.400 6"><path d="M0 0V6L3.400 3z" fill="#505050"/></svg>
<div class="b" style="left:1182.4px;top:580.4px;width:12.1px;height:11.1px;background:#e6e6e6;"></div>
<div class="b" style="left:262px;top:592px;width:933px;height:2px;background:linear-gradient(#c6c6c6,#dcdcdc);"></div>
<svg class="ic" style="left:520px;top:195px;width:140px;height:85px;filter:drop-shadow(1.500px 2px 1.500px rgba(0,0,0,.45))" viewBox="520 195 140 85"><circle cx="629.500" cy="212.900" r="5.200" fill="#f9413b"/><path d="M631.900 217.500L627.100 208.300L560.400 244.100L564.200 251.500z" fill="#f9413b"/><path d="M537.200 260.800L556.500 234.400L570.100 259.400z" fill="#f9413b" stroke="#f9413b" stroke-width="1" stroke-linejoin="round"/></svg>
</div></body></html>
